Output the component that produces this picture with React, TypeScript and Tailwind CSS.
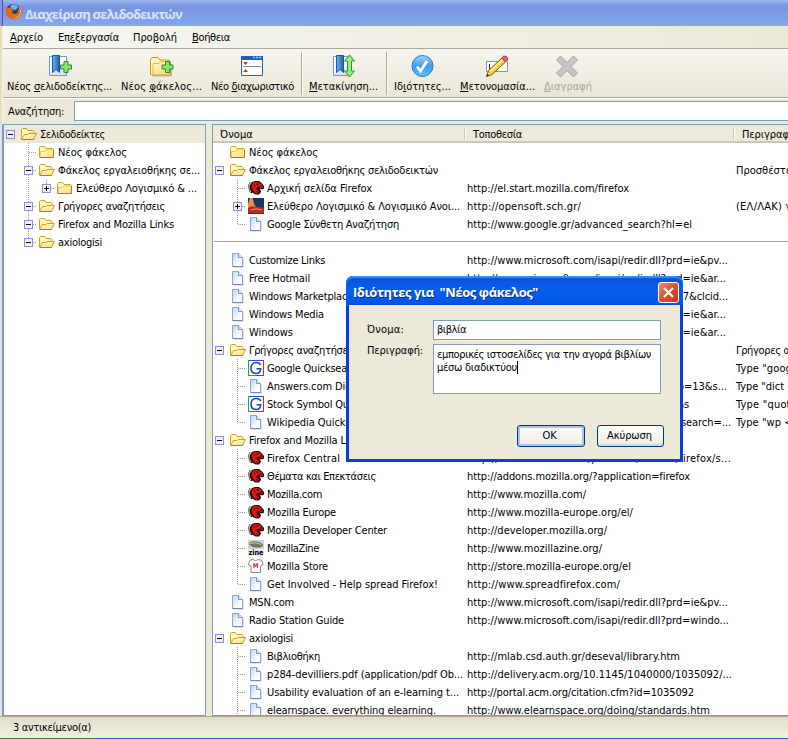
import { useLayoutEffect, useRef, useState } from "react";
import type { ReactNode } from "react";

type IconName = "folder" | "open" | "page" | "dino" | "google" | "zine" | "shirt" | "opensoft";

interface Node {
  name: string;
  w?: number;
  icon: IconName;
  depth: number;
  twisty?: "+" | "-";
  last?: boolean;
  url?: string;
  urlW?: number;
  desc?: string;
  descW?: number;
}

// Text with a fixed run length: spreads the difference over the letters
const Fit = ({ w, children, className = "" }: { w?: number; children: ReactNode; className?: string }) => {
  const ref = useRef<HTMLSpanElement>(null);
  const [spacing, setSpacing] = useState(0);

  useLayoutEffect(() => {
    const el = ref.current;
    if (!el || !w) return;
    el.style.letterSpacing = "0px";
    const natural = el.getBoundingClientRect().width;
    const next = (w - natural) / (el.textContent || " ").length;
    el.style.letterSpacing = next + "px";
    setSpacing(next);
  }, [w]);

  return (
    <span ref={ref} className={"inline-block whitespace-pre " + className} style={{ letterSpacing: spacing }}>
      {children}
    </span>
  );
};

const Gradients = () => (
  <svg width="0" height="0" className="absolute">
    <defs>
      <linearGradient id="gFolder" x1="0" y1="0" x2="1" y2="1">
        <stop offset="0" stopColor="#fffde0" />
        <stop offset="1" stopColor="#f9de70" />
      </linearGradient>
      <linearGradient id="gPage" x1="0" y1="0" x2="1" y2="1">
        <stop offset="0" stopColor="#b9d6f8" />
        <stop offset="0.7" stopColor="#ffffff" />
      </linearGradient>
      <linearGradient id="gRibbon" x1="0" y1="0" x2="1" y2="0">
        <stop offset="0" stopColor="#6fb4ea" />
        <stop offset="1" stopColor="#1560ac" />
      </linearGradient>
      <linearGradient id="gCheck" x1="0" y1="0" x2="0" y2="1">
        <stop offset="0" stopColor="#a5d5fc" />
        <stop offset="0.5" stopColor="#3f9cf0" />
        <stop offset="1" stopColor="#5cc5ff" />
      </linearGradient>
    </defs>
  </svg>
);

const RowIcon = ({ name }: { name: IconName }) => (
  <svg width="16" height="16" viewBox="0 0 16 16" className="shrink-0 overflow-visible">
    {name === "folder" && (
      <>
        <path d="M.5 13.500V3.500l1-1h4l1.500 2h6.500l1 1v8z" fill="url(#gFolder)" stroke="#c9a227" />
        <path d="M1.500 12.500V7.500h4l1.500-1.500h6.500" fill="none" stroke="#e6c75c" />
        <path d="M1 13.500h13.500V6" fill="none" stroke="#a98212" />
      </>
    )}
    {name === "open" && (
      <>
        <path d="M.5 13V3.500l1-1h4l1.500 2h5l1 1v2" fill="#fff6b8" stroke="#c9a227" />
        <path d="M.5 13.500L3.500 8.500h3.500l1-1h7.500L12.500 13.500z" fill="url(#gFolder)" stroke="#c9a020" />
        <path d="M1 13.500h11.500" stroke="#a98212" />
      </>
    )}
    {name === "page" && (
      <>
        <path d="M2.500 1.500h6l4 4v9h-10z" fill="url(#gPage)" stroke="#8aa6dc" />
        <path d="M8.500 1.500v4h4" fill="#e4effc" stroke="#7593cf" />
        <path d="M2.500 14.500h10" stroke="#7c7fc0" />
        <path d="M13.500 6.500v9h-10" fill="none" stroke="#000" strokeOpacity=".1" />
      </>
    )}
    {name === "dino" && (
      <>
        <path d="M4 2l3-1h4l2.500 2 2.500 3v2.500l-2 1-1.500-.500-1-.700 1 1.700.500 2-2 2.500H7.500L5 13 3 11.500 2 9l-.500-3L3 3.500z" fill="#1a0a0a" />
        <path d="M2.500 3H1M1.500 5H0M1.500 7H0M2 9H.5M2.500 11H1M4 12.500H2.500" stroke="#1a0a0a" />
        <path d="M5.500 2.500l2-.500h3l2.500 2 2 2.500v1.200l-1.500.300L11 6.500l-2 .700-.5 2 2.500 2-.500 1.800-2 .800-2-1.300L4.500 10 3.500 7l.500-3z" fill="#e01410" />
        <path d="M8.500 4h2M6 4.500l1 1.500M12.500 6l1.500.500M8.500 11.500l1.500 1" stroke="#1a0a0a" fill="none" />
      </>
    )}
    {name === "google" && (
      <>
        <rect width="16" height="16" fill="#fff" />
        <path d="M0 .5h16" stroke="#2b50c8" />
        <path d="M.5 0v16" stroke="#2ba24c" />
        <path d="M15.500 0v16" stroke="#e02020" />
        <path d="M0 15.500h8" stroke="#2ba24c" />
        <path d="M8 15.500h8" stroke="#2b50c8" />
        <path d="M12.500 5C12 3.300 10.500 2.500 8.300 2.500 5 2.500 3 4.800 3 8s2 5.500 5.200 5.500c2.600 0 4.300-1.500 4.500-4.800H8.500" fill="none" stroke="#2347a8" strokeWidth="1.600" />
      </>
    )}
    {name === "zine" && (
      <>
        <rect width="16" height="16" fill="#c9d4dc" />
        <rect y="9" width="16" height="7" fill="#eceeee" />
        <ellipse cx="8" cy="4.500" rx="7" ry="3" fill="#72785c" transform="rotate(8 8 4.500)" />
        <path d="M2 3.500q6-2 11 1" stroke="#c8ccae" fill="none" />
        <text x="0.500" y="15" fontSize="7.500" fontWeight="700" fontFamily="DejaVu Sans" textLength="15" lengthAdjust="spacingAndGlyphs">zine</text>
      </>
    )}
    {name === "shirt" && (
      <>
        <path d="M4.500 1.500q3 2 6 0l3.500 1 1 4.500-2.500 1v6.500H3V8L.5 7l1-4.500z" fill="#fff" stroke="#8a8a8a" />
        <text x="7.700" y="9.500" fontSize="6.500" fontWeight="700" fill="#c8281c" textAnchor="middle" fontFamily="DejaVu Sans">M</text>
      </>
    )}
    {name === "opensoft" && (
      <>
        <rect width="16" height="16" fill="#1b3560" />
        <path d="M2 0h2.500l2 7 2 2L0 10V6z" fill="#f08a50" />
        <path d="M0 10q4-3 8-1 5-1 8 1.500V16H0z" fill="#b82a1c" />
        <path d="M3 12q5-2.500 11 0" stroke="#ef9a80" fill="none" />
        <path d="M0 15.500h16" stroke="#7a1c14" />
      </>
    )}
  </svg>
);

const dots = { stroke: "#9b9a8a", strokeWidth: 1, strokeDasharray: "1 1", fill: "none" };

const TreeCell = ({ node, through }: { node: Node; through?: boolean }) => (
  <div className="flex h-[18px] min-w-0 items-center pl-[2px]">
    {Array.from({ length: node.depth }, (_, i) => (
      <svg key={i} width="18" height="18" className="shrink-0">
        {i > 0 && through && <path d="M4.500 0v18" {...dots} />}
      </svg>
    ))}
    <svg width="15" height="18" viewBox="0 0 15 18" className="shrink-0">
      {node.depth > 0 && (
        <>
          <path d={node.last ? "M4.500 0v9" : "M4.500 0v18"} {...dots} />
          <path d="M5 9.500h8" {...dots} />
        </>
      )}
      {node.twisty && (
        <>
          <rect x=".5" y="5.500" width="8" height="8" fill="#f1f0ea" stroke="#8f8fd2" />
          <path d="M2 9.500h5" stroke="#000" />
          {node.twisty === "+" && <path d="M4.500 7v5" stroke="#000" />}
        </>
      )}
    </svg>
    <RowIcon name={node.icon} />
    <Fit w={node.w} className="ml-[3px] mt-[2px]">{node.name}</Fit>
  </div>
);

const folders: Node[] = [
  { name: "Σελιδοδείκτες", w: 65, icon: "open", depth: 0, twisty: "-" },
  { name: "Νέος φάκελος", w: 69, icon: "folder", depth: 1 },
  { name: "Φάκελος εργαλειοθήκης σε...", w: 142, icon: "open", depth: 1, twisty: "-" },
  { name: "Ελεύθερο Λογισμικό & ...", w: 121, icon: "folder", depth: 2, twisty: "+", last: true },
  { name: "Γρήγορες αναζητήσεις", w: 107, icon: "open", depth: 1, twisty: "-" },
  { name: "Firefox and Mozilla Links", w: 116, icon: "open", depth: 1, twisty: "-" },
  { name: "axiologisi", w: 44, icon: "open", depth: 1, twisty: "-", last: true },
];

const ms = "http://www.microsoft.com/isapi/redir.dll?prd=ie&";

const before: Node[] = [
  { name: "Νέος φάκελος", w: 69, icon: "folder", depth: 0 },
  { name: "Φάκελος εργαλειοθήκης σελιδοδεικτών", w: 189, icon: "open", depth: 0, twisty: "-", desc: "Προσθέστε σε αυτόν", descW: 103 },
  { name: "Αρχική σελίδα Firefox", w: 105, icon: "dino", depth: 1, url: "http://el.start.mozilla.com/firefox", urlW: 162 },
  { name: "Ελεύθερο Λογισμικό & Λογισμικό Ανοι...", w: 193, icon: "opensoft", depth: 1, twisty: "+", url: "http://opensoft.sch.gr/", urlW: 114, desc: "(ΕΛ/ΛΑΚ) για", descW: 66 },
  { name: "Google Σύνθετη Αναζήτηση", w: 132, icon: "page", depth: 1, last: true, url: "http://www.google.gr/advanced_search?hl=el", urlW: 225 },
];

const after: Node[] = [
  { name: "Customize Links", w: 76, icon: "page", depth: 0, url: ms + "pv...", urlW: 261 },
  { name: "Free Hotmail", w: 61, icon: "page", depth: 0, url: ms + "ar...", urlW: 259 },
  { name: "Windows Marketplace", w: 104, icon: "page", depth: 0, url: "http://go.microsoft.com/fwlink/?LinkId=30857&clcid...", urlW: 261 },
  { name: "Windows Media", w: 75, icon: "page", depth: 0, url: ms + "ar...", urlW: 259 },
  { name: "Windows", w: 44, icon: "page", depth: 0, url: ms + "ar...", urlW: 259 },
  { name: "Γρήγορες αναζητήσεις", w: 107, icon: "open", depth: 0, twisty: "-", desc: "Γρήγορες αναζητήσεις", descW: 107 },
  { name: "Google Quicksearch", w: 95, icon: "google", depth: 1, url: "http://www.google.com/search?q=%s", urlW: 171, desc: 'Type "google', descW: 65 },
  { name: "Answers.com Dictionary", w: 118, icon: "page", depth: 1, url: "http://www.answers.com/main/ntquery?gwp=13&s...", urlW: 260, desc: 'Type "dict <word>"', descW: 96 },
  { name: "Stock Symbol Quicksearch", w: 127, icon: "google", depth: 1, url: "http://finance.google.com/finance?q=NYSE%s", urlW: 222, desc: 'Type "quote', descW: 61 },
  { name: "Wikipedia Quicksearch", w: 111, icon: "page", depth: 1, last: true, url: "http://en.wikipedia.org/wiki/Special:Search?search=...", urlW: 264, desc: 'Type "wp <topic>"', descW: 94 },
  { name: "Firefox and Mozilla Links", w: 116, icon: "open", depth: 0, twisty: "-" },
  { name: "Firefox Central", w: 73, icon: "dino", depth: 1, url: "http://www.mozilla.com/products/central/firefox/s...", urlW: 264 },
  { name: "Θέματα και Επεκτάσεις", w: 109, icon: "dino", depth: 1, url: "http://addons.mozilla.org/?application=firefox", urlW: 223 },
  { name: "Mozilla.com", w: 55, icon: "dino", depth: 1, url: "http://www.mozilla.com/", urlW: 119 },
  { name: "Mozilla Europe", w: 69, icon: "dino", depth: 1, url: "http://www.mozilla-europe.org/el/", urlW: 166 },
  { name: "Mozilla Developer Center", w: 120, icon: "dino", depth: 1, url: "http://developer.mozilla.org/", urlW: 140 },
  { name: "MozillaZine", w: 52, icon: "zine", depth: 1, url: "http://www.mozillazine.org/", urlW: 135 },
  { name: "Mozilla Store", w: 61, icon: "shirt", depth: 1, url: "http://store.mozilla-europe.org/el", urlW: 164 },
  { name: "Get Involved - Help spread Firefox!", w: 171, icon: "page", depth: 1, last: true, url: "http://www.spreadfirefox.com/", urlW: 153 },
  { name: "MSN.com", w: 45, icon: "page", depth: 0, url: ms + "pv...", urlW: 261 },
  { name: "Radio Station Guide", w: 95, icon: "page", depth: 0, url: "http://www.microsoft.com/isapi/redir.dll?prd=windo...", urlW: 262 },
  { name: "axiologisi", w: 44, icon: "open", depth: 0, twisty: "-" },
  { name: "Βιβλιοθήκη", w: 53, icon: "page", depth: 1, url: "http://mlab.csd.auth.gr/deseval/library.htm", urlW: 213 },
  { name: "p284-devilliers.pdf (application/pdf Ob...", w: 196, icon: "page", depth: 1, url: "http://delivery.acm.org/10.1145/1040000/1035092/...", urlW: 265 },
  { name: "Usability evaluation of an e-learning t...", w: 192, icon: "page", depth: 1, url: "http://portal.acm.org/citation.cfm?id=1035092", urlW: 227 },
  { name: "elearnspace. everything elearning.", w: 169, icon: "page", depth: 1, url: "http://www.elearnspace.org/doing/standards.htm", urlW: 243 },
];

const ListRow = ({ node }: { node: Node }) => (
  <div className="grid h-[18px] shrink-0 grid-cols-[251px_269px_110px] items-center">
    <TreeCell node={node} />
    <div className="pl-[3px] pt-[2px]">{node.url && <Fit w={node.urlW}>{node.url}</Fit>}</div>
    <div className="pl-[3px] pt-[2px]">{node.desc && <Fit w={node.descW}>{node.desc}</Fit>}</div>
  </div>
);

const ToolButton = ({ icon, w, children, disabled }: { icon: ReactNode; w: number; children: ReactNode; disabled?: boolean }) => (
  <div className={"flex shrink-0 flex-col items-center " + (disabled ? "text-[#aca899]" : "")}>
    <svg width="24" height="24" viewBox="0 0 24 24" className="overflow-visible">{icon}</svg>
    <Fit w={w} className="mt-px">{children}</Fit>
  </div>
);

const Divider = ({ className }: { className: string }) => (
  <div className={"-mt-[3px] h-[43px] w-[2px] shrink-0 border-l border-[#aca899] bg-white/70 " + className} />
);

const plus = <path d="M3.500.5h4v3.500H11v4H7.500v3.500h-4V8H0V4h3.500z" fill="#8ce46e" stroke="#258a30" />;

const bookmark = (
  <>
    <path d="M1.500 1.500h17v19h-17z" fill="#fbfdff" stroke="#6f96d8" />
    <path d="M2 18l16-8v10H2z" fill="#dce6f8" />
    <path d="M4.500.5h7v17l-3.500-3-3.500 3z" fill="url(#gRibbon)" stroke="#1558a0" />
  </>
);

const Toolbar = () => (
  <div className="flex h-[49px] shrink-0 border-b border-[#aca899] bg-linear-to-b from-[#f5f4ee] to-[#ebe7d6] pl-1 pt-[6px]">
    <ToolButton w={105} icon={<>{bookmark}<g transform="translate(12.500 6)">{plus}</g></>}>
      Νέος <u>σ</u>ελιδοδείκτης...
    </ToolButton>
    <div className="w-[9px] shrink-0" />
    <ToolButton w={81} icon={
      <>
        <path d="M.5 19V4.500l1.500-2h6l2 2.500h9L20.500 7v13H1.500z" fill="url(#gFolder)" stroke="#c39a1c" />
        <path d="M3 19V8.500h6l2-2h8.500" fill="none" stroke="#e2bd4a" />
        <path d="M2 21h19.500v-12" fill="none" stroke="#000" strokeOpacity=".2" />
        <g transform="translate(12 6)">{plus}</g>
      </>
    }>
      Νέος <u>φ</u>άκελος...
    </ToolButton>
    <div className="w-[9px] shrink-0" />
    <ToolButton w={83} icon={
      <>
        <path d="M.5 1.500h21v19H.5z" fill="#fff" stroke="#2463ae" />
        <path d="M0 1h22v4H0z" fill="#1c62b8" />
        <path d="M12 2.500h8" stroke="#9cc8f4" strokeWidth="1.500" strokeDasharray="2 1" />
        <path d="M2 11.500h18" stroke="#8a8a8a" />
        <path d="M2 7h5l-2.500 3zM2 17h5l-2.500-3z" fill="#cf3a18" />
      </>
    }>
      Νέο <u>δ</u>ιαχωριστικό
    </ToolButton>
    <Divider className="ml-[7px] mr-[6px]" />
    <ToolButton w={69} icon={
      <>
        {bookmark}
        <path d="M17.500 0l5 6h-3v10h3l-5 6-5-6h3V6h-3z" fill="#9aed72" stroke="#1f9a30" />
      </>
    }>
      <u>Μ</u>ετακίνηση...
    </ToolButton>
    <Divider className="ml-[8px] mr-[6px]" />
    <ToolButton w={57} icon={
      <>
        <circle cx="11.500" cy="11" r="10.500" fill="url(#gCheck)" stroke="#2878cc" />
        <path d="M6 11.500l3.500 4.500L16 6" fill="none" stroke="#fff" strokeWidth="2.800" />
      </>
    }>
      Ιδ<u>ι</u>ότητες...
    </ToolButton>
    <div className="w-[9px] shrink-0" />
    <ToolButton w={75} icon={
      <>
        <path d="M.5 6.500h21v10H.5z" fill="#fff" stroke="#7593cf" />
        <path d="M3.500 9v5" stroke="#333" />
        <path d="M.5 21.500L2.500 15.500 16 3l3.500 4L6 19.500z" fill="#f8cf38" stroke="#7d5813" />
        <path d="M4 16.500L17 4.500" stroke="#fff2a0" strokeWidth="1.500" />
        <path d="M16 3L17.500 1l3 .500L22 4l-2.500 3z" fill="#e0607a" stroke="#97445a" />
        <path d="M.5 21.500l.7-2.500 1.800 1.800z" fill="#222" />
      </>
    }>
      <u>Μ</u>ετονομασία...
    </ToolButton>
    <div className="w-[9px] shrink-0" />
    <ToolButton w={48} disabled icon={
      <path d="M4.500 1L11 7.500 17.500 1 21.500 5 15 11.500l6.500 6.500-4 4-6.500-6.500L4.500 22l-4-4L7 11.500.5 5z" fill="#c6c6c4" stroke="#a3a3a0" />
    }>
      <u>Δ</u>ιαγραφή
    </ToolButton>
  </div>
);

const PropertiesDialog = () => (
  <div className="absolute left-[346px] top-[276px] flex h-[186px] w-[337px] flex-col rounded-t-[7px] border-x-[3px] border-b-[3px] border-[#0a3ddb] bg-[#ece9d8]">
    <div className="-mx-[3px] flex h-[29px] shrink-0 items-center justify-between rounded-t-[7px] bg-linear-to-b from-[#0a4fd8] via-[#0560ee] to-[#0254e2] pl-[7px] pr-[4px] font-['Open_Sans','Noto_Sans',sans-serif] text-[13px] font-bold text-white shadow-[inset_0_2px_1px_#3c8cf8] [font-stretch:normal]">
      <Fit w={185} className="mt-[3px] [text-shadow:1px_1px_#0a2a80]">{'Ιδιότητες για  "Νέος φάκελος"'}</Fit>
      <div className="mt-[3px] flex h-[21px] w-[21px] items-center justify-center rounded-[3px] border border-white bg-linear-to-br from-[#ee8a6c] via-[#de4f2b] to-[#c23a14]">
        <svg width="13" height="13" viewBox="0 0 13 13">
          <path d="M2 2l9 9M11 2l-9 9" stroke="#fff" strokeWidth="2.200" />
        </svg>
      </div>
    </div>
    <div className="flex flex-col gap-1 pl-[18px] pt-[15px]">
      <div className="flex items-center">
        <div className="w-[66px]"><Fit w={37}>Όνομα:</Fit></div>
        <div className="flex h-5 w-[228px] items-center border border-[#7f9db9] bg-white pl-[3px]">
          <Fit w={29}>βιβλία</Fit>
        </div>
      </div>
      <div className="flex">
        <div className="w-[66px]"><Fit w={56}>Περιγραφή:</Fit></div>
        <div className="h-[50px] w-[228px] border border-[#7f9db9] bg-white pl-[3px] pt-[3px] leading-[13px]">
          <Fit w={214} className="block w-fit">εμπορικές ιστοσελίδες για την αγορά βιβλίων</Fit>
          <div className="flex">
            <Fit w={80}>μέσω διαδικτύου</Fit>
            <span className="h-[13px] w-px bg-black" />
          </div>
        </div>
      </div>
    </div>
    <div className="mt-[31px] flex gap-3 pl-[168px]">
      <button className="h-[22px] w-[68px] rounded-[3px] border border-[#003c74] bg-linear-to-b from-[#fdfdfb] to-[#eeece2] pr-[3px] shadow-[inset_0_0_0_2px_#a9c3ee]">
        <Fit w={14}>OK</Fit>
      </button>
      <button className="h-[22px] w-[67px] rounded-[3px] border border-[#003c74] bg-linear-to-b from-white to-[#ecebe4] pr-[2px] shadow-[inset_0_-2px_#dcd8ca]">
        <Fit w={45}>Ακύρωση</Fit>
      </button>
    </div>
  </div>
);

const App = () => (
  <div className="relative flex h-[739px] w-[788px] flex-col overflow-hidden bg-[#ece9d8] font-['DejaVu_Sans_Condensed','DejaVu_Sans',sans-serif] text-[11px] leading-[14px] text-black [font-stretch:condensed]">
    <Gradients />
    <div className="flex h-[26px] shrink-0 items-center bg-linear-to-b from-[#9db8f0] via-[#7793df] via-25% to-[#86a8ee]">
      <div className="h-full w-[3px] border-r border-[#4a4cc0] bg-[#8d94dc]" />
      <svg width="17" height="17" viewBox="0 0 17 17" className="-mt-[3px] ml-[2px]">
        <circle cx="8.500" cy="8.500" r="7.500" fill="#1f3f7c" />
        <path d="M5 3q3-3 7-1l1 3-3 2-3-1z" fill="#6cb4ea" />
        <path d="M1 4l2 1 2-1 1.500 2L9 7 7 8.500l.5 2 3 .5q3-1 2.500-5L15 7q2-2-1-5 4 4 2 9.500Q13 17 7.500 16.500 0 15 .5 7z" fill="#e06a18" />
        <path d="M13 3q3.500 5 1 9-2.500 3-6 3.500 7-.5 8-7Q16 5 13 3z" fill="#fbd046" />
      </svg>
      <Fit w={157} className="ml-[3px] mt-px font-['Open_Sans','Noto_Sans',sans-serif] text-[13px] font-bold text-[#d8e4fb] [font-stretch:normal]">
        Διαχείριση σελιδοδεικτών
      </Fit>
    </div>

    <div className="flex h-[98px] shrink-0">
      <div className="w-[3px] shrink-0 border-r border-[#f6f4ea] bg-[#e8dfb8]" />
      <div className="flex min-w-0 flex-1 flex-col">
        <div className="flex h-[23px] shrink-0 items-center border-b border-[#aca899] bg-linear-to-r from-[#f6f6f2] to-[#ece9d8] pl-[7px] pt-[2px]">
          <Fit w={33} className="mr-[15px]"><u>Α</u>ρχείο</Fit>
          <Fit w={61} className="mr-[14px]">Επ<u>ε</u>ξεργασία</Fit>
          <Fit w={44} className="mr-[15px]">Προ<u>β</u>ολή</Fit>
          <Fit w={38}><u>Β</u>οήθεια</Fit>
        </div>
        <Toolbar />
        <div className="flex h-[26px] shrink-0 items-center border-t border-white pl-[5px]">
          <div className="w-[66px] shrink-0"><Fit w={56}>Αναζήτηση:</Fit></div>
          <div className="-mt-px h-[20px] flex-1 border border-r-0 border-[#7f9db9] bg-white" />
        </div>
      </div>
    </div>

    <div className="flex h-[592px] shrink-0">
      <div className="w-[2px] shrink-0 bg-[#dfe4ea]" />
      <div className="w-[204px] shrink-0 border border-l-2 border-[#7f9db9] bg-white">
        {folders.map((node, i) => (
          <div key={i} className={i === 0 ? "bg-[#ece9d8]" : ""}>
            <TreeCell node={node} through />
          </div>
        ))}
      </div>
      <div className="flex h-full min-w-0 flex-1 flex-col pl-[6px]">
        <div className="flex h-full flex-col overflow-hidden border border-r-0 border-[#7f9db9] bg-white">
          <div className="grid h-[18px] shrink-0 grid-cols-[252px_269px_110px] items-center border-b-2 border-[#cbc7b8] bg-[#ebeadb]">
            <div className="pl-[7px]"><Fit w={33} className="mt-[3px]">Όνομα</Fit></div>
            <div className="flex h-full items-center">
              <div className="-ml-px h-[11px] w-[2px] border-r border-white bg-[#c7c5b2]" />
              <Fit w={49} className="ml-[7px] mt-[3px]">Τοποθεσία</Fit>
            </div>
            <div className="flex h-full items-center">
              <div className="-ml-px h-[11px] w-[2px] border-r border-white bg-[#c7c5b2]" />
              <Fit w={53} className="ml-[7px] mt-[3px]">Περιγραφή</Fit>
            </div>
          </div>
          {before.map((node, i) => <ListRow key={i} node={node} />)}
          <div className="h-[18px] shrink-0 pl-px pt-[8px]">
            <div className="h-px bg-[#aca899]" />
          </div>
          {after.map((node, i) => <ListRow key={i} node={node} />)}
        </div>
      </div>
    </div>

    <div className="flex h-[22px] shrink-0 items-center border-t border-[#aca899] bg-linear-to-b from-[#dedbcb] via-[#ebe8d8] to-[#efeddf] pl-[13px]">
      <Fit w={78}>3 αντικείμενο(α)</Fit>
    </div>
    <div className="flex h-px shrink-0 bg-[#2a5fd0]">
      <div className="w-24 bg-[#37852f]" />
    </div>

    <PropertiesDialog />
  </div>
);

export default App;
